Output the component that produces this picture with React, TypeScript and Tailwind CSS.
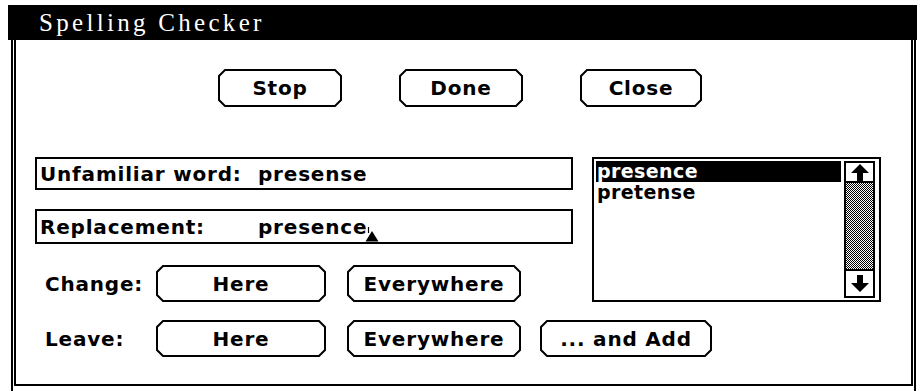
import React from "react";

const UI = "font-['DejaVu_Sans',sans-serif] font-bold text-black tracking-[0.8px]";

function ChamferButton({
  label,
  w,
  h,
  className,
}: {
  label: string;
  w: number;
  h: number;
  className: string;
}) {
  const c = 7;
  const s = 1;
  const pts = [
    [c, s],
    [w - c, s],
    [w - s, c],
    [w - s, h - c],
    [w - c, h - s],
    [c, h - s],
    [s, h - c],
    [s, c],
  ]
    .map((p) => p.join(","))
    .join(" ");
  return (
    <div className={`relative flex items-center justify-center shrink-0 ${className}`}>
      <svg className="absolute inset-0" width={w} height={h} viewBox={`0 0 ${w} ${h}`}>
        <polygon points={pts} fill="white" stroke="black" strokeWidth="2" />
      </svg>
      <span className={`relative text-[20px] leading-none ${UI}`}>{label}</span>
    </div>
  );
}

function ArrowUp() {
  return (
    <svg width="20" height="17" viewBox="0 0 20 17">
      <path d="M10 0 L19 9 L13 9 L13 17 L7 17 L7 9 L1 9 Z" fill="black" />
    </svg>
  );
}

function ArrowDown() {
  return (
    <svg width="20" height="17" viewBox="0 0 20 17">
      <path d="M10 17 L19 8 L13 8 L13 0 L7 0 L7 8 L1 8 Z" fill="black" />
    </svg>
  );
}

function Field({ label, value, caret, className }: { label: string; value: string; caret?: boolean; className: string }) {
  return (
    <div className={`flex items-center border-2 border-black pl-[3px] ${className}`}>
      <span className={`w-[218px] text-[20px] leading-none ${UI}`}>{label}</span>
      <span className={`relative text-[20px] leading-none ${UI}`}>
        {value}
        {caret && (
          <svg className="absolute right-[-12px] top-[10px]" width="14" height="15" viewBox="0 0 14 15">
            <line x1="3.5" y1="0" x2="3.5" y2="6" stroke="black" strokeWidth="1.2" />
            <polygon points="7,4 13.5,14.5 0.5,14.5" fill="black" />
          </svg>
        )}
      </span>
    </div>
  );
}

export default function App() {
  return (
    <div className="w-[921px] h-[391px] overflow-hidden bg-white">
      <div className="ml-[8px] pt-[5px] w-[909px]">
        {/* title bar */}
        <div className="h-[35px] bg-black flex items-center pl-[31px]">
          <span className="font-['Liberation_Serif',serif] text-[25px] leading-none tracking-[3.3px] text-white">Spelling Checker</span>
        </div>

        {/* double frame */}
        <div className="ml-[3px] mr-[1px] h-[360px] border-x-2 border-black px-px">
          <div className="h-[346px] border-2 border-t-0 border-black">
            {/* top buttons */}
            <div className="flex pt-[29px] pl-[202px] gap-[57px]">
              <ChamferButton label="Stop" w={124} h={38} className="w-[124px] h-[38px]" />
              <ChamferButton label="Done" w={124} h={38} className="w-[124px] h-[38px]" />
              <ChamferButton label="Close" w={122} h={38} className="w-[122px] h-[38px]" />
            </div>

            <div className="flex mt-[50px] pl-[19px]">
              <div className="w-[538px]">
                <Field label="Unfamiliar word:" value="presense" className="h-[33px]" />
                <Field label="Replacement:" value="presence" caret className="h-[35px] mt-[19px]" />
                <div className="flex items-center mt-[21px] h-[37px]">
                  <span className={`w-[121px] pl-[10px] text-[20px] leading-none ${UI}`}>Change:</span>
                  <ChamferButton label="Here" w={170} h={37} className="w-[170px] h-[37px]" />
                  <ChamferButton label="Everywhere" w={174} h={37} className="w-[174px] h-[37px] ml-[21px]" />
                </div>
              </div>

              {/* suggestion list */}
              <div className="ml-[19px] w-[289px] h-[145px] border-2 border-black flex p-[2px]">
                <div className="flex-1">
                  <div className="h-[21px] bg-black text-white pl-[1px] text-[19px] leading-[21px] tracking-[0.4px] font-['DejaVu_Sans',sans-serif] font-bold">
                    presence
                  </div>
                  <div className="h-[21px] pl-[1px] text-[19px] leading-[21px] tracking-[0.4px] font-['DejaVu_Sans',sans-serif] font-bold text-black">
                    pretense
                  </div>
                </div>
                <div className="ml-[3px] w-[31px] border-2 border-black flex flex-col">
                  <div className="h-[20px] flex items-center justify-center border-b-2 border-black">
                    <ArrowUp />
                  </div>
                  <div className="flex-1 bg-[repeating-conic-gradient(#000_0_25%,#fff_0_50%)] bg-[length:2px_2px]" />
                  <div className="h-[27px] flex items-center justify-center border-t-2 border-black">
                    <ArrowDown />
                  </div>
                </div>
                <div className="w-[2px]" />
              </div>
            </div>

            {/* leave row */}
            <div className="flex items-center mt-[18px] h-[37px] pl-[19px]">
              <span className={`w-[121px] pl-[10px] text-[20px] leading-none ${UI}`}>Leave:</span>
              <ChamferButton label="Here" w={170} h={37} className="w-[170px] h-[37px]" />
              <ChamferButton label="Everywhere" w={174} h={37} className="w-[174px] h-[37px] ml-[21px]" />
              <ChamferButton label="... and Add" w={172} h={37} className="w-[172px] h-[37px] ml-[19px]" />
            </div>
          </div>
        </div>
      </div>
    </div>
  );
}
